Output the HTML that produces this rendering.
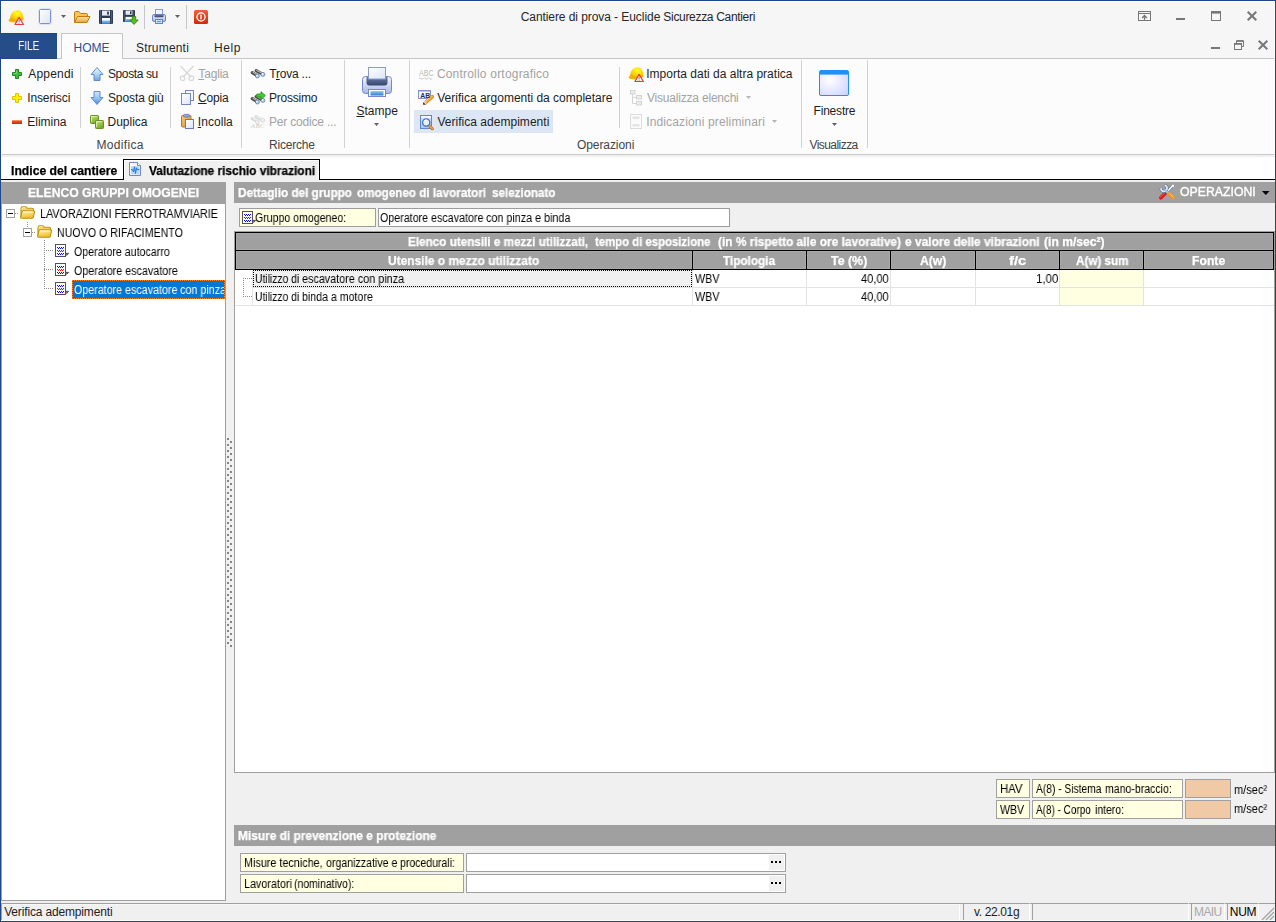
<!DOCTYPE html>
<html lang="it"><head><meta charset="utf-8"><title>Cantiere di prova - Euclide Sicurezza Cantieri</title>
<style>
html,body{margin:0;padding:0;background:#f0f0f0;}
body{width:1276px;height:922px;overflow:hidden;font-family:"Liberation Sans",sans-serif;}
#win{position:absolute;left:0;top:0;width:1276px;height:922px;overflow:hidden;background:#f0f0f0;}
.a{position:absolute;box-sizing:border-box;}
.t{position:absolute;white-space:nowrap;font-family:"Liberation Sans",sans-serif;}
svg{position:absolute;overflow:visible;}
u{text-decoration:underline;text-underline-offset:1px;}

.g{will-change:transform;}

</style></head>
<body>
<div id="win">
<svg width="0" height="0" style="position:absolute"><defs>
<linearGradient id="gDoc" x1="0" y1="0" x2="1" y2="1"><stop offset="0" stop-color="#ffffff"/><stop offset="1" stop-color="#dbe4f6"/></linearGradient>
<linearGradient id="gFold" x1="0" y1="0" x2="0" y2="1"><stop offset="0" stop-color="#ffe9a6"/><stop offset="1" stop-color="#eea030"/></linearGradient>
<linearGradient id="gBlueS" x1="0" y1="0" x2="0" y2="1"><stop offset="0" stop-color="#9ccbf2"/><stop offset="1" stop-color="#2e78c8"/></linearGradient>
<linearGradient id="gRed" x1="0" y1="0" x2="0" y2="1"><stop offset="0" stop-color="#f0603c"/><stop offset="1" stop-color="#d02806"/></linearGradient>
<linearGradient id="gArr" x1="0" y1="0" x2="0" y2="1"><stop offset="0" stop-color="#eaf5ff"/><stop offset="0.5" stop-color="#b4d6f6"/><stop offset="1" stop-color="#6aa6e6"/></linearGradient>
<linearGradient id="gArrD" x1="0" y1="0" x2="0" y2="1"><stop offset="0" stop-color="#cfe6fb"/><stop offset="0.5" stop-color="#98c4f0"/><stop offset="1" stop-color="#4a8adc"/></linearGradient>
<linearGradient id="gGrn" x1="0" y1="0" x2="0.6" y2="1"><stop offset="0" stop-color="#d6eca0"/><stop offset="0.45" stop-color="#a4cc50"/><stop offset="1" stop-color="#74a626"/></linearGradient>
<linearGradient id="gPr" x1="0" y1="0" x2="0" y2="1"><stop offset="0" stop-color="#f4f7ff"/><stop offset="1" stop-color="#a9b8e6"/></linearGradient>
<linearGradient id="gSlot" x1="0" y1="0" x2="0" y2="1"><stop offset="0" stop-color="#6d7ea6"/><stop offset="1" stop-color="#35456c"/></linearGradient>
<linearGradient id="gClip" x1="0" y1="0" x2="1" y2="1"><stop offset="0" stop-color="#f6cf86"/><stop offset="1" stop-color="#d48a2a"/></linearGradient>
<radialGradient id="gHelm" cx="0.55" cy="0.3" r="0.7"><stop offset="0" stop-color="#ffff20"/><stop offset="0.6" stop-color="#fbd406"/><stop offset="1" stop-color="#e8a800"/></radialGradient>
<radialGradient id="gWin" cx="0.35" cy="0.4" r="0.8"><stop offset="0" stop-color="#ffffff"/><stop offset="1" stop-color="#d2d2fb"/></radialGradient>
<linearGradient id="gYF" x1="0" y1="0" x2="0.3" y2="1"><stop offset="0" stop-color="#fff7b6"/><stop offset="1" stop-color="#efbc2e"/></linearGradient>
<linearGradient id="gMag" x1="0" y1="0" x2="0" y2="1"><stop offset="0" stop-color="#d6e7fa"/><stop offset="1" stop-color="#a6c6ec"/></linearGradient>
</defs></svg>
<div class="a" style="left:0px;top:0px;width:1276px;height:922px;background:#1f4685;"></div>
<div class="a" style="left:1px;top:1px;width:1274px;height:920px;background:#ffffff;"></div>
<div class="a" style="left:1px;top:155px;width:1274px;height:766px;background:#f0f0f0;"></div>
<div class="a" style="left:2px;top:2px;width:1272px;height:57px;background:#f6f6f6;"></div>
<div class="a" style="left:2px;top:58px;width:1272px;height:97px;background:#fcfcfc;border-top:1px solid #c6c6c6;border-bottom:1px solid #c9c9c9;"></div>
<div class="a" style="left:0px;top:33px;width:57px;height:26px;background:#254d87;border-top:1px solid #1e4583;border-bottom:1px solid #204684;"></div>
<span class="t g" style="left:17.77px;top:38.30px;font-size:12px;line-height:16px;color:#ffffff;transform:scaleX(0.8472);transform-origin:0 0;">FILE</span>
<div class="a" style="left:61px;top:33px;width:62px;height:26px;background:#fcfcfc;border:1px solid #c6c6c6;border-bottom:none;"></div>
<span class="t" style="left:73.52px;top:39.90px;font-size:12px;line-height:16px;color:#2b509a;letter-spacing:0.000px;">HOME</span>
<span class="t" style="left:135.96px;top:39.90px;font-size:12px;line-height:16px;color:#262626;letter-spacing:0.187px;">Strumenti</span>
<span class="t" style="left:214.02px;top:39.90px;font-size:12px;line-height:16px;color:#262626;letter-spacing:0.600px;">Help</span>
<span class="t" style="left:520.69px;top:8.90px;font-size:12px;line-height:16px;color:#262626;letter-spacing:-0.074px;">Cantiere di prova</span>
<span class="t" style="left:613.97px;top:8.90px;font-size:12px;line-height:16px;color:#262626;letter-spacing:-0.040px;">- Euclide</span>
<span class="t" style="left:663.36px;top:8.90px;font-size:12px;line-height:16px;color:#262626;letter-spacing:-0.319px;">Sicurezza Cantieri</span>
<svg style="left:8px;top:9px" width="16" height="17" viewBox="0 0 16 17"><path d="M0.3,11.2 C1.5,13.6 7,14 10.5,12.6 L10.5,10 L2,9.6 Z" fill="#f0b400"/>
<path d="M2.2,10.6 C2.2,4.5 5.5,1.2 9.3,1.2 C13,1.2 15.4,4.6 15.4,9.4 L15.5,11 C12.5,12.6 6,12.6 2.2,10.6 Z" fill="url(#gHelm)"/>
<path d="M5.2,3.2 C6,2.4 7,2 8,1.9" stroke="#fff8b0" stroke-width="1" fill="none"/>
<path d="M11.1,8.4 L15.4,15.5 L6.9,15.5 Z" fill="#f2f2f2" stroke="#e43a3a" stroke-width="1.15" stroke-linejoin="round"/>
<path d="M11.1,10.6 V13.1" stroke="#8a8a8a" stroke-width="1.1"/><rect x="10.55" y="13.7" width="1.1" height="1" fill="#8a8a8a"/></svg>
<svg style="left:38px;top:8px" width="14" height="17" viewBox="0 0 14 17"><rect x="1.5" y="1.5" width="11" height="14" rx="1" fill="url(#gDoc)" stroke="#7f90cc"/><rect x="0.5" y="0.5" width="13" height="16" rx="2" fill="none" stroke="#d4daf0" stroke-opacity="0.7"/></svg>
<svg style="left:61px;top:15px" width="5" height="3" viewBox="0 0 5 3"><path d="M0,0 H5 L2.5,3 Z" fill="#606060"/></svg>
<svg style="left:73px;top:10px" width="18" height="14" viewBox="0 0 18 14"><path d="M1.5,12.5 L1.5,2.6 Q1.5,1.5 2.6,1.5 L6,1.5 L7.6,3.5 L13.4,3.5 Q14.5,3.5 14.5,4.6 L14.5,6" fill="#f6c55c" stroke="#c07a1a"/>
<path d="M1.5,12.5 L4.6,6.5 L17,6.5 L14,12.5 Z" fill="url(#gFold)" stroke="#c07a1a" stroke-linejoin="round"/></svg>
<svg style="left:99px;top:10px" width="14" height="14" viewBox="0 0 14 14"><g transform="scale(1.0)"><rect x="0" y="0" width="14" height="14" rx="1" fill="#2e3a54"/>
<rect x="1" y="0" width="0.8" height="14" fill="#55617e"/><rect x="12.2" y="0" width="0.8" height="14" fill="#55617e"/>
<rect x="3" y="0.6" width="8" height="5" fill="#e6eaf4"/><rect x="8.2" y="1.6" width="1.6" height="3" fill="#20242e"/>
<rect x="3" y="8" width="8" height="6" fill="#ffffff"/><rect x="3" y="10.4" width="8" height="3.6" fill="url(#gBlueS)"/></g></svg>
<svg style="left:123px;top:10px" width="12" height="12" viewBox="0 0 12 12"><g transform="scale(0.8571428571428571)"><rect x="0" y="0" width="14" height="14" rx="1" fill="#2e3a54"/>
<rect x="1" y="0" width="0.8" height="14" fill="#55617e"/><rect x="12.2" y="0" width="0.8" height="14" fill="#55617e"/>
<rect x="3" y="0.6" width="8" height="5" fill="#e6eaf4"/><rect x="8.2" y="1.6" width="1.6" height="3" fill="#20242e"/>
<rect x="3" y="8" width="8" height="6" fill="#ffffff"/><rect x="3" y="10.4" width="8" height="3.6" fill="url(#gBlueS)"/></g></svg>
<svg style="left:129px;top:16px" width="10" height="9" viewBox="0 0 10 9"><path d="M3.3,0.6 H6.7 V4 H9.2 L5,8.4 L0.8,4 H3.3 Z" fill="#5cbc22" stroke="#35880e" stroke-width="0.9" stroke-linejoin="round"/></svg>
<div class="a" style="left:144px;top:5px;width:1px;height:24px;background:#c6c6c6;"></div>
<svg style="left:152px;top:9px" width="15" height="15" viewBox="0 0 15 15"><rect x="3.5" y="0.5" width="7" height="6" fill="#eef2fb" stroke="#8a9bd2"/>
<rect x="0.5" y="5.5" width="13" height="7" rx="1.6" fill="url(#gPr)" stroke="#6e80c4"/>
<rect x="2.4" y="5.6" width="9.2" height="2.6" rx="0.8" fill="url(#gSlot)"/>
<rect x="3.5" y="10.5" width="7" height="4" fill="#ffffff" stroke="#6e80c4"/>
<rect x="4.6" y="11.6" width="4.8" height="1.8" fill="#5aa2e4"/></svg>
<svg style="left:175px;top:15px" width="5" height="3" viewBox="0 0 5 3"><path d="M0,0 H5 L2.5,3 Z" fill="#606060"/></svg>
<div class="a" style="left:186px;top:5px;width:1px;height:24px;background:#c6c6c6;"></div>
<svg style="left:194px;top:10px" width="14" height="14" viewBox="0 0 14 14"><rect x="0" y="0" width="14" height="14" rx="1.6" fill="url(#gRed)"/><circle cx="7" cy="7" r="4.1" fill="none" stroke="#fff" stroke-width="1.3"/><rect x="6.3" y="4.6" width="1.4" height="4.8" fill="#fff"/></svg>
<svg style="left:1138px;top:11px" width="13" height="10" viewBox="0 0 13 10"><rect x="0.5" y="0.5" width="12" height="9" fill="none" stroke="#777777"/><path d="M0.5,2.5 H12.5" stroke="#777777"/><path d="M6.5,9 V4.6 M4,7 L6.5,4.5 L9,7" stroke="#777777" fill="none" stroke-width="1.25"/></svg>
<div class="a" style="left:1176px;top:18px;width:9px;height:2px;background:#777777;"></div>
<svg style="left:1211px;top:11px" width="10" height="10" viewBox="0 0 10 10"><rect x="0.5" y="0.5" width="9" height="9" fill="none" stroke="#777777"/><rect x="0" y="0" width="10" height="2.6" fill="#777777"/></svg>
<svg style="left:1247px;top:11px" width="10" height="10" viewBox="0 0 10 10"><path d="M0.7,0.7 L9.3,9.3 M9.3,0.7 L0.7,9.3" stroke="#777777" stroke-width="2"/></svg>
<div class="a" style="left:1211px;top:47px;width:9px;height:2px;background:#777777;"></div>
<svg style="left:1234px;top:40px" width="10" height="10" viewBox="0 0 10 10"><path d="M2.5,3 V0.8 H9.5 V6.5 H7.5" fill="none" stroke="#777777" stroke-width="1"/><path d="M2.5,1 H9.5" stroke="#777777" stroke-width="1.6"/><rect x="0.5" y="3.5" width="7" height="6" fill="none" stroke="#777777"/><path d="M0.5,4 H7.5" stroke="#777777" stroke-width="1.6"/></svg>
<svg style="left:1258px;top:40px" width="10" height="10" viewBox="0 0 10 10"><path d="M0.7,0.7 L9.3,9.3 M9.3,0.7 L0.7,9.3" stroke="#777777" stroke-width="2"/></svg>
<span class="t" style="left:28.28px;top:65.70px;font-size:12px;line-height:16px;color:#1e1e1e;letter-spacing:0.198px;">Appendi</span>
<span class="t" style="left:27.19px;top:89.70px;font-size:12px;line-height:16px;color:#1e1e1e;letter-spacing:-0.112px;">Inserisci</span>
<span class="t" style="left:27.32px;top:113.60px;font-size:12px;line-height:16px;color:#1e1e1e;letter-spacing:-0.029px;">Elimina</span>
<svg style="left:12px;top:69px" width="10" height="10" viewBox="0 0 10 10"><path d="M3.5,0.5 H6.5 V3.5 H9.5 V6.5 H6.5 V9.5 H3.5 V6.5 H0.5 V3.5 H3.5 Z" fill="#3fbb3f" stroke="#1f8e1f"/><path d="M4.5,1.5 V4.5 H1.5" stroke="#8fe08f" fill="none" stroke-width="1" stroke-opacity="0.7"/></svg>
<svg style="left:12px;top:93px" width="10" height="10" viewBox="0 0 10 10"><path d="M3.5,0.5 H6.5 V3.5 H9.5 V6.5 H6.5 V9.5 H3.5 V6.5 H0.5 V3.5 H3.5 Z" fill="#ffee00" stroke="#dcc600"/><path d="M4.5,1.5 V4.5 H1.5" stroke="#fff200" fill="none" stroke-width="1" stroke-opacity="0.7"/></svg>
<svg style="left:12px;top:120px" width="10" height="4" viewBox="0 0 10 4"><rect x="0" y="0" width="10" height="4" fill="url(#gRed)"/><rect x="0" y="0" width="10" height="1" fill="#ff8a5c"/></svg>
<div class="a" style="left:80px;top:67px;width:1px;height:61px;background:#d2d2d2;"></div>
<span class="t" style="left:107.96px;top:65.70px;font-size:12px;line-height:16px;color:#1e1e1e;letter-spacing:-0.379px;">Sposta su</span>
<span class="t" style="left:107.96px;top:89.70px;font-size:12px;line-height:16px;color:#1e1e1e;letter-spacing:-0.101px;">Sposta giù</span>
<span class="t" style="left:107.52px;top:113.60px;font-size:12px;line-height:16px;color:#1e1e1e;letter-spacing:-0.008px;">Duplica</span>
<svg style="left:90px;top:66px" width="14" height="16" viewBox="0 0 14 16"><path d="M7,1.5 L13,8.5 L10,8.5 L10,14.5 L4,14.5 L4,8.5 L1,8.5 Z" fill="url(#gArr)" stroke="#5584c8" stroke-width="0.9" stroke-linejoin="round"/></svg>
<svg style="left:90px;top:90px" width="14" height="16" viewBox="0 0 14 16"><path d="M4,1.5 L10,1.5 L10,7.5 L13,7.5 L7,14.5 L1,7.5 L4,7.5 Z" fill="url(#gArrD)" stroke="#5584c8" stroke-width="0.9" stroke-linejoin="round"/></svg>
<svg style="left:90px;top:115px" width="14" height="14" viewBox="0 0 14 14"><rect x="0.5" y="0.5" width="8" height="8" rx="0.8" fill="url(#gGrn)" stroke="#6a8e26"/><rect x="5.5" y="5.5" width="8" height="8" rx="0.8" fill="url(#gGrn)" stroke="#6a8e26"/><path d="M1.5,7 V1.5 H7 M6.5,12 V6.5 H12" stroke="#e6f4c0" stroke-opacity="0.8" fill="none" stroke-width="0.9"/></svg>
<div class="a" style="left:170px;top:67px;width:1px;height:61px;background:#d2d2d2;"></div>
<span class="t" style="left:198.33px;top:65.70px;font-size:12px;line-height:16px;color:#a3a3a3;letter-spacing:-0.178px;"><u>T</u>aglia</span>
<span class="t" style="left:198.09px;top:89.70px;font-size:12px;line-height:16px;color:#1e1e1e;letter-spacing:-0.162px;"><u>C</u>opia</span>
<span class="t" style="left:197.79px;top:113.60px;font-size:12px;line-height:16px;color:#1e1e1e;letter-spacing:0.051px;"><u>I</u>ncolla</span>
<svg style="left:179px;top:65px" width="16" height="17" viewBox="0 0 16 17"><path d="M1.5,1 L12,12.2 M14.5,1 L4,12.2" stroke="#d9d9d9" stroke-width="1.3" fill="none"/><circle cx="3.6" cy="13.2" r="2.3" fill="none" stroke="#d9d9d9" stroke-width="1.2"/><circle cx="12.4" cy="13.2" r="2.3" fill="none" stroke="#d9d9d9" stroke-width="1.2"/></svg>
<svg style="left:181px;top:90px" width="14" height="16" viewBox="0 0 14 16"><rect x="4.5" y="0.5" width="8" height="10" fill="#f6f8fd" stroke="#7686be"/><rect x="0.5" y="3.5" width="9" height="11" fill="url(#gDoc)" stroke="#7686be"/></svg>
<svg style="left:181px;top:114px" width="14" height="16" viewBox="0 0 14 16"><rect x="0.5" y="1.5" width="9.5" height="11.5" rx="1" fill="url(#gClip)" stroke="#b87a22"/><rect x="2.5" y="0.4" width="6" height="2.6" rx="1" fill="#98a6da" stroke="#5f70b6" stroke-width="0.8"/><rect x="4.5" y="5.5" width="8" height="9" fill="url(#gDoc)" stroke="#6a7abc"/></svg>
<div class="a" style="left:241px;top:60px;width:1px;height:88px;background:#d2d2d2;"></div>
<span class="t" style="left:269.23px;top:65.70px;font-size:12px;line-height:16px;color:#1e1e1e;letter-spacing:-0.214px;">T<u>r</u>ova ...</span>
<span class="t" style="left:269.02px;top:89.70px;font-size:12px;line-height:16px;color:#1e1e1e;letter-spacing:-0.218px;">Prossimo</span>
<span class="t" style="left:269.02px;top:113.60px;font-size:12px;line-height:16px;color:#a3a3a3;letter-spacing:-0.189px;">Per codice ...</span>
<svg style="left:251px;top:69px" width="15" height="10" viewBox="0 0 15 10"><path d="M1.3,3.6 L6,6.5" stroke="#4e4e4e" stroke-width="3.2" stroke-linecap="round"/>
<path d="M5.2,1.7 L11.4,5.1" stroke="#4e4e4e" stroke-width="3.2" stroke-linecap="round"/>
<path d="M1.6,3.1 L5.6,5.5 M5.4,1.2 L10.8,4.1" stroke="#b9b9b9" stroke-width="1.1"/>
<circle cx="6.4" cy="7" r="2" fill="#a9d3fb" stroke="#5b6f88" stroke-width="0.7"/>
<circle cx="11.9" cy="5.4" r="2" fill="#a9d3fb" stroke="#5b6f88" stroke-width="0.7"/>
<circle cx="5.9" cy="6.5" r="0.8" fill="#ffffff"/><circle cx="11.4" cy="4.9" r="0.8" fill="#ffffff"/></svg>
<svg style="left:251px;top:95px" width="15" height="10" viewBox="0 0 15 10"><path d="M1.3,3.6 L6,6.5" stroke="#4e4e4e" stroke-width="3.2" stroke-linecap="round"/>
<path d="M5.2,1.7 L11.4,5.1" stroke="#4e4e4e" stroke-width="3.2" stroke-linecap="round"/>
<path d="M1.6,3.1 L5.6,5.5 M5.4,1.2 L10.8,4.1" stroke="#b9b9b9" stroke-width="1.1"/>
<circle cx="6.4" cy="7" r="2" fill="#a9d3fb" stroke="#5b6f88" stroke-width="0.7"/>
<circle cx="11.9" cy="5.4" r="2" fill="#a9d3fb" stroke="#5b6f88" stroke-width="0.7"/>
<circle cx="5.9" cy="6.5" r="0.8" fill="#ffffff"/><circle cx="11.4" cy="4.9" r="0.8" fill="#ffffff"/></svg>
<svg style="left:256px;top:90.5px" width="10" height="9" viewBox="0 0 10 9"><path d="M0.8,3.1 H5 V0.7 L9.3,4.5 L5,8.3 V5.9 H0.8 Z" fill="#3fd22a" stroke="#1a9a14" stroke-width="0.9" stroke-linejoin="round"/></svg>
<svg style="left:251px;top:115px" width="15" height="10" viewBox="0 0 15 10"><path d="M1.3,3.6 L6,6.5" stroke="#dadada" stroke-width="3.2" stroke-linecap="round"/>
<path d="M5.2,1.7 L11.4,5.1" stroke="#dadada" stroke-width="3.2" stroke-linecap="round"/>
<path d="M1.6,3.1 L5.6,5.5 M5.4,1.2 L10.8,4.1" stroke="#f0f0f0" stroke-width="1.1"/>
<circle cx="6.4" cy="7" r="2" fill="#ececec" stroke="#d4d4d4" stroke-width="0.7"/>
<circle cx="11.9" cy="5.4" r="2" fill="#ececec" stroke="#d4d4d4" stroke-width="0.7"/>
<circle cx="5.9" cy="6.5" r="0.8" fill="#f8f8f8"/><circle cx="11.4" cy="4.9" r="0.8" fill="#f8f8f8"/></svg>
<span class="t" style="left:250.8px;top:122px;font-family:'Liberation Serif',serif;font-style:italic;font-size:7px;line-height:8px;color:#cacaca;letter-spacing:0.35px">ABC</span>
<div class="a" style="left:344px;top:60px;width:1px;height:88px;background:#d2d2d2;"></div>
<span class="t" style="left:356.46px;top:102.60px;font-size:12px;line-height:16px;color:#1e1e1e;letter-spacing:0.001px;"><u>S</u>tampe</span>
<svg style="left:361px;top:66px" width="32" height="32" viewBox="0 0 32 32"><rect x="7.5" y="1.5" width="17" height="12" fill="url(#gDoc)" stroke="#8b9bd0"/>
<rect x="1.5" y="10.5" width="29" height="17" rx="3" fill="url(#gPr)" stroke="#7486c8"/>
<path d="M5.5,11 H26.5 V16.5 Q26.5,19.5 23.5,19.5 H8.5 Q5.5,19.5 5.5,16.5 Z" fill="url(#gSlot)"/>
<rect x="7.5" y="1.5" width="17" height="11.5" fill="url(#gDoc)" stroke="#8b9bd0"/>
<rect x="7.5" y="23.5" width="17" height="7" fill="#ffffff" stroke="#7486c8"/>
<rect x="9.5" y="25" width="13" height="4.5" fill="url(#gBlueS)"/></svg>
<svg style="left:374px;top:123px" width="5" height="3" viewBox="0 0 5 3"><path d="M0,0 H5 L2.5,3 Z" fill="#606060"/></svg>
<div class="a" style="left:409px;top:60px;width:1px;height:88px;background:#d2d2d2;"></div>
<span class="t" style="left:436.89px;top:65.70px;font-size:12px;line-height:16px;color:#a3a3a3;letter-spacing:0.203px;">Controllo ortografico</span>
<span class="t" style="left:437.25px;top:89.70px;font-size:12px;line-height:16px;color:#1e1e1e;letter-spacing:-0.005px;">Verifica argomenti</span>
<span class="t" style="left:536.40px;top:89.70px;font-size:12px;line-height:16px;color:#1e1e1e;letter-spacing:-0.001px;">da completare</span>
<div class="a" style="left:414px;top:110px;width:139px;height:23px;background:#dce6f4;"></div>
<span class="t" style="left:437.45px;top:113.60px;font-size:12px;line-height:16px;color:#1e1e1e;letter-spacing:0.025px;">Verifica adempimenti</span>
<span class="t" style="left:418.8px;top:69.4px;font-size:8.4px;line-height:9px;color:#b9b9b9;transform:scaleX(0.84);transform-origin:0 0">ABC</span>
<svg style="left:418px;top:77px" width="16" height="3" viewBox="0 0 16 3"><path d="M0.8,1.6 q1.1,-1.4 2.2,0 t2.2,0 t2.2,0 t2.2,0 t2.2,0 t2.2,0" stroke="#c4c4c4" fill="none" stroke-width="0.9"/></svg>
<svg style="left:418px;top:90px" width="16" height="16" viewBox="0 0 16 16"><rect x="0.5" y="0.5" width="12" height="8" fill="#f6f8fd" stroke="#8494cc"/><rect x="0.5" y="0.3" width="12" height="1.2" fill="#8494cc"/>
<path d="M14.2,6.6 L7,13" stroke="#c87818" stroke-width="3.6" stroke-linecap="round"/><path d="M14.2,6.6 L7,13" stroke="#f0a838" stroke-width="2.6" stroke-linecap="round"/><path d="M13.6,5.9 L6.4,12.3" stroke="#ffe090" stroke-width="0.9"/>
<path d="M5,14.8 L5.5,12.2 L7.6,14.2 Z" fill="#1c2a48"/><path d="M5.5,12.2 L6.6,11.2 L8.6,13.2 L7.6,14.2 Z" fill="#f4dcb0"/></svg>
<span class="t" style="left:420.3px;top:91.6px;font-size:6.8px;font-weight:700;line-height:7px;color:#1f2f5c;letter-spacing:0.1px">AB</span>
<svg style="left:420px;top:115px" width="14" height="15" viewBox="0 0 14 15"><rect x="0.5" y="0.5" width="11" height="13" fill="url(#gMag)" stroke="#5b8acc"/><rect x="1" y="1" width="10" height="2" fill="#f4f8fe"/>
<path d="M8.6,10 L12.3,13.7" stroke="#a86414" stroke-width="3" stroke-linecap="round"/><path d="M8.6,10 L12.3,13.7" stroke="#f0a040" stroke-width="1.9" stroke-linecap="round"/>
<circle cx="6.2" cy="7.5" r="3.6" fill="#e4f0fc" stroke="#446fb4" stroke-width="1.3"/><path d="M4,6.6 A2.4,2.4 0 0 1 6.6,5" stroke="#ffffff" stroke-width="0.9" fill="none"/></svg>
<div class="a" style="left:619px;top:67px;width:1px;height:61px;background:#d2d2d2;"></div>
<span class="t" style="left:646.19px;top:65.70px;font-size:12px;line-height:16px;color:#1e1e1e;letter-spacing:0.008px;">Importa dati da altra pratica</span>
<span class="t" style="left:646.95px;top:89.70px;font-size:12px;line-height:16px;color:#a3a3a3;letter-spacing:-0.195px;">Visualizza elenchi</span>
<span class="t" style="left:646.19px;top:113.60px;font-size:12px;line-height:16px;color:#a3a3a3;letter-spacing:0.147px;">Indicazioni preliminari</span>
<svg style="left:628px;top:66px" width="16" height="17" viewBox="0 0 16 17"><path d="M0.3,11.2 C1.5,13.6 7,14 10.5,12.6 L10.5,10 L2,9.6 Z" fill="#f0b400"/>
<path d="M2.2,10.6 C2.2,4.5 5.5,1.2 9.3,1.2 C13,1.2 15.4,4.6 15.4,9.4 L15.5,11 C12.5,12.6 6,12.6 2.2,10.6 Z" fill="url(#gHelm)"/>
<path d="M5.2,3.2 C6,2.4 7,2 8,1.9" stroke="#fff8b0" stroke-width="1" fill="none"/>
<path d="M11.1,8.4 L15.4,15.5 L6.9,15.5 Z" fill="#f2f2f2" stroke="#e43a3a" stroke-width="1.15" stroke-linejoin="round"/>
<path d="M11.1,10.6 V13.1" stroke="#8a8a8a" stroke-width="1.1"/><rect x="10.55" y="13.7" width="1.1" height="1" fill="#8a8a8a"/></svg>
<svg style="left:630px;top:90px" width="13" height="16" viewBox="0 0 13 16"><path d="M2.5,4 V13.5 H6.5 M2.5,7.5 H6.5" stroke="#d4d4d4" fill="none"/><rect x="0.5" y="0.5" width="4.5" height="3.5" fill="#ececec" stroke="#d4d4d4"/><rect x="6.5" y="5.5" width="5" height="3.5" fill="#ececec" stroke="#d4d4d4"/><rect x="6.5" y="11.5" width="5" height="3.5" fill="#ececec" stroke="#d4d4d4"/></svg>
<svg style="left:630px;top:114px" width="13" height="16" viewBox="0 0 13 16"><rect x="0.5" y="0.5" width="11" height="14" fill="#fbfbfb" stroke="#dcdcdc"/><rect x="2.5" y="2.5" width="7" height="2.5" fill="#e4e4e4"/><rect x="2.5" y="10" width="7" height="2.5" fill="#e4e4e4"/></svg>
<svg style="left:746px;top:96px" width="5" height="3" viewBox="0 0 5 3"><path d="M0,0 H5 L2.5,3 Z" fill="#b4b4b4"/></svg>
<svg style="left:772px;top:120px" width="5" height="3" viewBox="0 0 5 3"><path d="M0,0 H5 L2.5,3 Z" fill="#b4b4b4"/></svg>
<div class="a" style="left:801px;top:60px;width:1px;height:88px;background:#d2d2d2;"></div>
<span class="t" style="left:813.52px;top:102.50px;font-size:12px;line-height:16px;color:#1e1e1e;letter-spacing:-0.192px;">Finestre</span>
<svg style="left:819px;top:70px" width="30" height="26" viewBox="0 0 30 26"><rect x="0.5" y="0.5" width="29" height="25" rx="1.5" fill="url(#gWin)" stroke="#1e90fa"/><rect x="1" y="1" width="28" height="3.6" fill="#1e90fa"/></svg>
<svg style="left:832px;top:123px" width="5" height="3" viewBox="0 0 5 3"><path d="M0,0 H5 L2.5,3 Z" fill="#606060"/></svg>
<div class="a" style="left:867px;top:60px;width:1px;height:88px;background:#d2d2d2;"></div>
<span class="t" style="left:96.52px;top:136.90px;font-size:12px;line-height:16px;color:#444444;letter-spacing:0.328px;">Modifica</span>
<span class="t" style="left:269.02px;top:136.90px;font-size:12px;line-height:16px;color:#444444;letter-spacing:-0.192px;">Ricerche</span>
<span class="t" style="left:576.93px;top:136.90px;font-size:12px;line-height:16px;color:#444444;letter-spacing:-0.073px;">Operazioni</span>
<span class="t" style="left:809.45px;top:136.90px;font-size:12px;line-height:16px;color:#444444;letter-spacing:-0.551px;">Visualizza</span>
<div class="a" style="left:1px;top:157px;width:1274px;height:22px;background:#ffffff;"></div>
<div class="a" style="left:1px;top:179px;width:1274px;height:1px;background:#000000;"></div>
<div class="a" style="left:123px;top:159px;width:197px;height:21px;background:#f0f0f0;border:1px solid #000;border-bottom:none;"></div>
<div class="a" style="left:124px;top:160px;width:195px;height:1px;background:#ffffff;"></div>
<div class="a" style="left:318px;top:160px;width:1px;height:19px;background:#ffffff;"></div>
<div class="a" style="left:124px;top:160px;width:1px;height:19px;background:#ffffff;"></div>
<span class="t g" style="left:11.19px;top:163.00px;font-size:12px;line-height:16px;color:#000;font-weight:700;-webkit-text-stroke:0.25px #000;transform:scaleX(1.0144);transform-origin:0 0;">Indice del cantiere</span>
<span class="t g" style="left:149.22px;top:163.00px;font-size:12px;line-height:16px;color:#000;font-weight:700;-webkit-text-stroke:0.25px #000;transform:scaleX(0.9885);transform-origin:0 0;">Valutazione rischio vibrazioni</span>
<svg style="left:129px;top:162px" width="12" height="14" viewBox="0 0 12 14"><path d="M0.5,0.5 H8.5 L11.5,3.5 V13.5 H0.5 Z" fill="url(#gDoc)" stroke="#728ac4"/><path d="M8.5,0.5 V3.5 H11.5" fill="#fff" stroke="#728ac4"/>
<rect x="2" y="4.2" width="8.4" height="8" fill="#b9d7f7"/>
<path d="M2,7.6 H3.4 L4.4,9.7 L5.5,4.8 L6.5,11.5 L7.5,5.8 L8.3,7.6 H10.3" stroke="#1a72e0" fill="none" stroke-width="1" stroke-linejoin="round"/></svg>
<div class="a" style="left:1px;top:182px;width:225px;height:21px;background:#a0a0a0;"></div>
<span class="t g" style="left:27.69px;top:184.60px;font-size:12px;line-height:16px;color:#ffffff;font-weight:700;-webkit-text-stroke:0.25px #ffffff;transform:scaleX(1.0145);transform-origin:0 0;">ELENCO GRUPPI OMOGENEI</span>
<div class="a" style="left:1px;top:203px;width:225px;height:698px;background:#ffffff;border:1px solid #a0a0a0;"></div>
<span class="t g" style="left:39.62px;top:205.50px;font-size:12px;line-height:16px;color:#000;transform:scaleX(0.8961);transform-origin:0 0;">LAVORAZIONI FERROTRAMVIARIE</span>
<span class="t g" style="left:56.93px;top:224.50px;font-size:12px;line-height:16px;color:#000;transform:scaleX(0.8878);transform-origin:0 0;">NUOVO O RIFACIMENTO</span>
<span class="t g" style="left:74.10px;top:243.50px;font-size:12px;line-height:16px;color:#000;transform:scaleX(0.8851);transform-origin:0 0;">Operatore autocarro</span>
<span class="t g" style="left:74.09px;top:262.50px;font-size:12px;line-height:16px;color:#000;transform:scaleX(0.8933);transform-origin:0 0;">Operatore escavatore</span>
<div class="a" style="left:72px;top:280px;width:153px;height:19px;background:#0078d7;border:1px dotted #ff8728;"></div>
<span class="t g" style="left:74.09px;top:281.50px;font-size:12px;line-height:16px;color:#fff;transform:scaleX(0.8907);transform-origin:0 0;">Operatore escavatore</span>
<span class="t g" style="left:179.94px;top:281.50px;font-size:12px;line-height:16px;color:#fff;transform:scaleX(0.8967);transform-origin:0 0;width:49.40px;overflow:hidden;">con pinza e binda</span>
<svg style="left:6px;top:209px" width="9" height="9" viewBox="0 0 9 9"><rect x="0.5" y="0.5" width="8" height="8" fill="#fff" stroke="#a2a2a2"/><path d="M2,4.5 H7" stroke="#000" stroke-width="1"/></svg>
<div class="a" style="left:15px;top:213px;width:4px;height:1px;background-image:repeating-linear-gradient(90deg,#8c8c8c 0 1px,transparent 1px 2px);"></div>
<svg style="left:20px;top:206px" width="15" height="13" viewBox="0 0 15 13"><path d="M1,11 L1,2.4 Q1,0.7 2.6,0.7 L5.4,0.7 Q6.6,0.7 7.2,2.2 L12,2.2 Q13.6,2.2 13.6,3.8 L13.6,6" fill="#f4d25e" stroke="#bf920e" stroke-width="1.1"/>
<path d="M2,3.6 V2.6 Q2,1.8 2.8,1.8 H5.4" fill="none" stroke="#fff6c4" stroke-width="0.9"/>
<path d="M1.6,12.3 Q0.5,12.3 0.7,11.2 L1.9,5.8 Q2.1,4.7 3.2,4.7 L13.6,4.7 Q14.7,4.7 14.5,5.8 L13.3,11.2 Q13.1,12.3 12,12.3 Z" fill="url(#gYF)" stroke="#bf920e" stroke-width="1.1"/>
<path d="M3,6 H12.6" stroke="#fffbe0" stroke-width="0.9"/></svg>
<div class="a" style="left:27px;top:222px;width:1px;height:6px;background-image:repeating-linear-gradient(180deg,#8c8c8c 0 1px,transparent 1px 2px);"></div>
<svg style="left:23px;top:228px" width="9" height="9" viewBox="0 0 9 9"><rect x="0.5" y="0.5" width="8" height="8" fill="#fff" stroke="#a2a2a2"/><path d="M2,4.5 H7" stroke="#000" stroke-width="1"/></svg>
<div class="a" style="left:32px;top:232px;width:4px;height:1px;background-image:repeating-linear-gradient(90deg,#8c8c8c 0 1px,transparent 1px 2px);"></div>
<svg style="left:37px;top:225px" width="15" height="13" viewBox="0 0 15 13"><path d="M1,11 L1,2.4 Q1,0.7 2.6,0.7 L5.4,0.7 Q6.6,0.7 7.2,2.2 L12,2.2 Q13.6,2.2 13.6,3.8 L13.6,6" fill="#f4d25e" stroke="#bf920e" stroke-width="1.1"/>
<path d="M2,3.6 V2.6 Q2,1.8 2.8,1.8 H5.4" fill="none" stroke="#fff6c4" stroke-width="0.9"/>
<path d="M1.6,12.3 Q0.5,12.3 0.7,11.2 L1.9,5.8 Q2.1,4.7 3.2,4.7 L13.6,4.7 Q14.7,4.7 14.5,5.8 L13.3,11.2 Q13.1,12.3 12,12.3 Z" fill="url(#gYF)" stroke="#bf920e" stroke-width="1.1"/>
<path d="M3,6 H12.6" stroke="#fffbe0" stroke-width="0.9"/></svg>
<div class="a" style="left:44px;top:240px;width:1px;height:49px;background-image:repeating-linear-gradient(180deg,#8c8c8c 0 1px,transparent 1px 2px);"></div>
<div class="a" style="left:44px;top:250px;width:9px;height:1px;background-image:repeating-linear-gradient(90deg,#8c8c8c 0 1px,transparent 1px 2px);"></div>
<div class="a" style="left:44px;top:269px;width:9px;height:1px;background-image:repeating-linear-gradient(90deg,#8c8c8c 0 1px,transparent 1px 2px);"></div>
<div class="a" style="left:44px;top:288px;width:9px;height:1px;background-image:repeating-linear-gradient(90deg,#8c8c8c 0 1px,transparent 1px 2px);"></div>
<svg style="left:55px;top:244px" width="15" height="13" viewBox="0 0 15 13"><g shape-rendering="crispEdges"><rect x="0.5" y="0.5" width="10" height="12" fill="#ffffff" stroke="#5a4e4e"/><rect x="2" y="3" width="1" height="1" fill="#0000ff"/><rect x="4" y="3" width="1" height="1" fill="#0000ff"/><rect x="6" y="3" width="1" height="1" fill="#0000ff"/><rect x="8" y="3" width="1" height="1" fill="#0000ff"/><rect x="3" y="4" width="1" height="1" fill="#0000ff"/><rect x="5" y="4" width="1" height="1" fill="#0000ff"/><rect x="7" y="4" width="1" height="1" fill="#0000ff"/><rect x="2" y="6" width="1" height="1" fill="#f00000"/><rect x="4" y="6" width="1" height="1" fill="#f00000"/><rect x="6" y="6" width="1" height="1" fill="#f00000"/><rect x="8" y="6" width="1" height="1" fill="#f00000"/><rect x="3" y="7" width="1" height="1" fill="#f00000"/><rect x="5" y="7" width="1" height="1" fill="#f00000"/><rect x="7" y="7" width="1" height="1" fill="#f00000"/><rect x="2" y="9" width="1" height="1" fill="#0000ff"/><rect x="4" y="9" width="1" height="1" fill="#0000ff"/><rect x="6" y="9" width="1" height="1" fill="#0000ff"/><rect x="8" y="9" width="1" height="1" fill="#0000ff"/><rect x="3" y="10" width="1" height="1" fill="#0000ff"/><rect x="5" y="10" width="1" height="1" fill="#0000ff"/><rect x="7" y="10" width="1" height="1" fill="#0000ff"/></g><path d="M11,8.8 L14.4,9 L11.4,12.2 Z" fill="#555"/></svg>
<svg style="left:55px;top:263px" width="15" height="13" viewBox="0 0 15 13"><g shape-rendering="crispEdges"><rect x="0.5" y="0.5" width="10" height="12" fill="#ffffff" stroke="#5a4e4e"/><rect x="2" y="3" width="1" height="1" fill="#0000ff"/><rect x="4" y="3" width="1" height="1" fill="#0000ff"/><rect x="6" y="3" width="1" height="1" fill="#0000ff"/><rect x="8" y="3" width="1" height="1" fill="#0000ff"/><rect x="3" y="4" width="1" height="1" fill="#0000ff"/><rect x="5" y="4" width="1" height="1" fill="#0000ff"/><rect x="7" y="4" width="1" height="1" fill="#0000ff"/><rect x="2" y="6" width="1" height="1" fill="#f00000"/><rect x="4" y="6" width="1" height="1" fill="#f00000"/><rect x="6" y="6" width="1" height="1" fill="#f00000"/><rect x="8" y="6" width="1" height="1" fill="#f00000"/><rect x="3" y="7" width="1" height="1" fill="#f00000"/><rect x="5" y="7" width="1" height="1" fill="#f00000"/><rect x="7" y="7" width="1" height="1" fill="#f00000"/><rect x="2" y="9" width="1" height="1" fill="#0000ff"/><rect x="4" y="9" width="1" height="1" fill="#0000ff"/><rect x="6" y="9" width="1" height="1" fill="#0000ff"/><rect x="8" y="9" width="1" height="1" fill="#0000ff"/><rect x="3" y="10" width="1" height="1" fill="#0000ff"/><rect x="5" y="10" width="1" height="1" fill="#0000ff"/><rect x="7" y="10" width="1" height="1" fill="#0000ff"/></g><path d="M11,8.8 L14.4,9 L11.4,12.2 Z" fill="#555"/></svg>
<svg style="left:55px;top:282px" width="15" height="13" viewBox="0 0 15 13"><g shape-rendering="crispEdges"><rect x="0.5" y="0.5" width="10" height="12" fill="#ffffff" stroke="#5a4e4e"/><rect x="2" y="3" width="1" height="1" fill="#0000ff"/><rect x="4" y="3" width="1" height="1" fill="#0000ff"/><rect x="6" y="3" width="1" height="1" fill="#0000ff"/><rect x="8" y="3" width="1" height="1" fill="#0000ff"/><rect x="3" y="4" width="1" height="1" fill="#0000ff"/><rect x="5" y="4" width="1" height="1" fill="#0000ff"/><rect x="7" y="4" width="1" height="1" fill="#0000ff"/><rect x="2" y="6" width="1" height="1" fill="#f00000"/><rect x="4" y="6" width="1" height="1" fill="#f00000"/><rect x="6" y="6" width="1" height="1" fill="#f00000"/><rect x="8" y="6" width="1" height="1" fill="#f00000"/><rect x="3" y="7" width="1" height="1" fill="#f00000"/><rect x="5" y="7" width="1" height="1" fill="#f00000"/><rect x="7" y="7" width="1" height="1" fill="#f00000"/><rect x="2" y="9" width="1" height="1" fill="#0000ff"/><rect x="4" y="9" width="1" height="1" fill="#0000ff"/><rect x="6" y="9" width="1" height="1" fill="#0000ff"/><rect x="8" y="9" width="1" height="1" fill="#0000ff"/><rect x="3" y="10" width="1" height="1" fill="#0000ff"/><rect x="5" y="10" width="1" height="1" fill="#0000ff"/><rect x="7" y="10" width="1" height="1" fill="#0000ff"/></g><path d="M11,8.8 L14.4,9 L11.4,12.2 Z" fill="#555"/></svg>
<div class="a" style="left:227px;top:438px;width:2px;height:206px;background-image:repeating-linear-gradient(180deg,#858585 0 2px,transparent 2px 6px);"></div>
<div class="a" style="left:230px;top:441px;width:2px;height:206px;background-image:repeating-linear-gradient(180deg,#858585 0 2px,transparent 2px 6px);"></div>
<div class="a" style="left:228px;top:439px;width:2px;height:206px;background-image:repeating-linear-gradient(180deg,transparent 0 1px,#f8f8f8 1px 2px,transparent 2px 6px);opacity:0.6;"></div>
<div class="a" style="left:234px;top:182px;width:1041px;height:21px;background:#a0a0a0;"></div>
<span class="t g" style="left:238.22px;top:184.60px;font-size:12px;line-height:16px;color:#ffffff;font-weight:700;-webkit-text-stroke:0.25px #ffffff;transform:scaleX(0.9766);transform-origin:0 0;">Dettaglio del gruppo</span>
<span class="t g" style="left:357.14px;top:184.60px;font-size:12px;line-height:16px;color:#ffffff;font-weight:700;-webkit-text-stroke:0.25px #ffffff;transform:scaleX(0.9728);transform-origin:0 0;">omogeneo di lavoratori</span>
<span class="t g" style="left:491.69px;top:184.60px;font-size:12px;line-height:16px;color:#ffffff;font-weight:700;-webkit-text-stroke:0.25px #ffffff;transform:scaleX(0.9710);transform-origin:0 0;">selezionato</span>
<span class="t g" style="left:1179.62px;top:183.50px;font-size:12px;line-height:16px;color:#ffffff;-webkit-text-stroke:0.35px #ffffff;transform:scaleX(1.0229);transform-origin:0 0;">OPERAZIONI</span>
<svg style="left:1159px;top:184px" width="16" height="16" viewBox="0 0 16 16"><path d="M14,1.6 L5.2,10.4" stroke="#5a6a80" stroke-width="2.6" stroke-linecap="round"/><path d="M14,1.6 L5.2,10.4" stroke="#f4f8fc" stroke-width="1.5" stroke-linecap="round"/><circle cx="14" cy="1.7" r="1.25" fill="#ffffff"/>
<path d="M6,9.6 L1.8,13.8" stroke="#e01414" stroke-width="3.6" stroke-linecap="round"/><path d="M5.4,9.4 L1.4,13.2" stroke="#f86060" stroke-width="0.9" stroke-linecap="round"/>
<path d="M1.9,4.2 A3.1,3.1 0 1 0 5.9,1.3" fill="none" stroke="#5070a0" stroke-width="2.7"/><path d="M1.9,4.2 A3.1,3.1 0 1 0 5.9,1.3" fill="none" stroke="#e4eefa" stroke-width="1.6"/><path d="M5.4,5.4 L10,10" stroke="#9fc0e8" stroke-width="2"/>
<path d="M10.2,10 L14,13.8" stroke="#ef9a14" stroke-width="3.6" stroke-linecap="round"/><path d="M10.8,9.6 L14.4,13.2" stroke="#ffd870" stroke-width="0.9" stroke-linecap="round"/></svg>
<svg style="left:1262px;top:191px" width="8" height="4" viewBox="0 0 8 4"><path d="M0,0 H7.6 L3.8,4 Z" fill="#000"/></svg>
<div class="a" style="left:239px;top:208px;width:137px;height:19px;background:#ffffe1;border:1px solid #9c9c9c;"></div>
<svg style="left:242px;top:211px" width="15" height="13" viewBox="0 0 15 13"><g shape-rendering="crispEdges"><rect x="0.5" y="0.5" width="10" height="12" fill="#ffffff" stroke="#5a4e4e"/><rect x="2" y="3" width="1" height="1" fill="#0000ff"/><rect x="4" y="3" width="1" height="1" fill="#0000ff"/><rect x="6" y="3" width="1" height="1" fill="#0000ff"/><rect x="8" y="3" width="1" height="1" fill="#0000ff"/><rect x="3" y="4" width="1" height="1" fill="#0000ff"/><rect x="5" y="4" width="1" height="1" fill="#0000ff"/><rect x="7" y="4" width="1" height="1" fill="#0000ff"/><rect x="2" y="6" width="1" height="1" fill="#f00000"/><rect x="4" y="6" width="1" height="1" fill="#f00000"/><rect x="6" y="6" width="1" height="1" fill="#f00000"/><rect x="8" y="6" width="1" height="1" fill="#f00000"/><rect x="3" y="7" width="1" height="1" fill="#f00000"/><rect x="5" y="7" width="1" height="1" fill="#f00000"/><rect x="7" y="7" width="1" height="1" fill="#f00000"/><rect x="2" y="9" width="1" height="1" fill="#0000ff"/><rect x="4" y="9" width="1" height="1" fill="#0000ff"/><rect x="6" y="9" width="1" height="1" fill="#0000ff"/><rect x="8" y="9" width="1" height="1" fill="#0000ff"/><rect x="3" y="10" width="1" height="1" fill="#0000ff"/><rect x="5" y="10" width="1" height="1" fill="#0000ff"/><rect x="7" y="10" width="1" height="1" fill="#0000ff"/></g><path d="M11,8.8 L14.4,9 L11.4,12.2 Z" fill="#555"/></svg>
<span class="t g" style="left:255.37px;top:209.50px;font-size:12px;line-height:16px;color:#000;transform:scaleX(0.8810);transform-origin:0 0;">Gruppo omogeneo:</span>
<div class="a" style="left:378px;top:208px;width:352px;height:19px;background:#ffffff;border:1px solid #9c9c9c;"></div>
<span class="t g" style="left:380.19px;top:209.50px;font-size:12px;line-height:16px;color:#000;transform:scaleX(0.8907);transform-origin:0 0;">Operatore escavatore</span>
<span class="t g" style="left:486.04px;top:209.50px;font-size:12px;line-height:16px;color:#000;transform:scaleX(0.8967);transform-origin:0 0;">con pinza e binda</span>
<div class="a" style="left:234px;top:231px;width:1041px;height:542px;background:#ffffff;border:1px solid #a0a0a0;"></div>
<div class="a" style="left:235px;top:232px;width:1039px;height:38px;background:#a0a0a0;border:1px solid #000;"></div>
<div class="a" style="left:235px;top:250px;width:1039px;height:1px;background:#000;"></div>
<div class="a" style="left:236px;top:233px;width:1037px;height:1px;background:#a9a9a9;"></div>
<div class="a" style="left:236px;top:251px;width:1037px;height:1px;background:#a9a9a9;"></div>
<div class="a" style="left:236px;top:249px;width:1037px;height:1px;background:#a9a9a9;"></div>
<div class="a" style="left:236px;top:268px;width:1037px;height:1px;background:#a9a9a9;"></div>
<div class="a" style="left:236px;top:233px;width:1px;height:17px;background:#a9a9a9;"></div>
<div class="a" style="left:236px;top:251px;width:1px;height:18px;background:#a9a9a9;"></div>
<div class="a" style="left:1272px;top:233px;width:1px;height:17px;background:#a9a9a9;"></div>
<div class="a" style="left:1272px;top:251px;width:1px;height:18px;background:#a9a9a9;"></div>
<div class="a" style="left:691px;top:251px;width:3px;height:18px;background:#a9a9a9;"></div>
<div class="a" style="left:692px;top:251px;width:1px;height:18px;background:#000;"></div>
<div class="a" style="left:805px;top:251px;width:3px;height:18px;background:#a9a9a9;"></div>
<div class="a" style="left:806px;top:251px;width:1px;height:18px;background:#000;"></div>
<div class="a" style="left:889px;top:251px;width:3px;height:18px;background:#a9a9a9;"></div>
<div class="a" style="left:890px;top:251px;width:1px;height:18px;background:#000;"></div>
<div class="a" style="left:974px;top:251px;width:3px;height:18px;background:#a9a9a9;"></div>
<div class="a" style="left:975px;top:251px;width:1px;height:18px;background:#000;"></div>
<div class="a" style="left:1058px;top:251px;width:3px;height:18px;background:#a9a9a9;"></div>
<div class="a" style="left:1059px;top:251px;width:1px;height:18px;background:#000;"></div>
<div class="a" style="left:1142px;top:251px;width:3px;height:18px;background:#a9a9a9;"></div>
<div class="a" style="left:1143px;top:251px;width:1px;height:18px;background:#000;"></div>
<span class="t g" style="left:408.22px;top:233.70px;font-size:12px;line-height:16px;color:#fff;font-weight:700;-webkit-text-stroke:0.25px #fff;transform:scaleX(0.9754);transform-origin:0 0;">Elenco utensili e mezzi utilizzati,</span>
<span class="t g" style="left:595.36px;top:233.70px;font-size:12px;line-height:16px;color:#fff;font-weight:700;-webkit-text-stroke:0.25px #fff;transform:scaleX(0.9460);transform-origin:0 0;">tempo di esposizione</span>
<span class="t g" style="left:717.61px;top:233.70px;font-size:12px;line-height:16px;color:#fff;font-weight:700;-webkit-text-stroke:0.25px #fff;transform:scaleX(0.9905);transform-origin:0 0;">(in % rispetto alle ore lavorative)</span>
<span class="t g" style="left:904.83px;top:233.70px;font-size:12px;line-height:16px;color:#fff;font-weight:700;-webkit-text-stroke:0.25px #fff;transform:scaleX(0.9942);transform-origin:0 0;">e valore delle vibrazioni</span>
<span class="t g" style="left:1044.00px;top:233.70px;font-size:12px;line-height:16px;color:#fff;font-weight:700;-webkit-text-stroke:0.25px #fff;transform:scaleX(1.0082);transform-origin:0 0;">(in m/sec²)</span>
<span class="t g" style="left:387.78px;top:252.70px;font-size:12px;line-height:16px;color:#fff;font-weight:700;-webkit-text-stroke:0.25px #fff;transform:scaleX(0.9945);transform-origin:0 0;">Utensile o mezzo utilizzato</span>
<span class="t g" style="left:723.37px;top:252.70px;font-size:12px;line-height:16px;color:#fff;font-weight:700;-webkit-text-stroke:0.25px #fff;transform:scaleX(0.9802);transform-origin:0 0;">Tipologia</span>
<span class="t g" style="left:830.86px;top:252.70px;font-size:12px;line-height:16px;color:#fff;font-weight:700;-webkit-text-stroke:0.25px #fff;transform:scaleX(1.0327);transform-origin:0 0;">Te (%)</span>
<span class="t g" style="left:919.70px;top:252.70px;font-size:12px;line-height:16px;color:#fff;font-weight:700;-webkit-text-stroke:0.25px #fff;transform:scaleX(1.0158);transform-origin:0 0;">A(w)</span>
<span class="t g" style="left:1009.25px;top:252.70px;font-size:12px;line-height:16px;color:#fff;font-weight:700;-webkit-text-stroke:0.25px #fff;transform:scaleX(1.2259);transform-origin:0 0;">f/c</span>
<span class="t g" style="left:1075.71px;top:252.70px;font-size:12px;line-height:16px;color:#fff;font-weight:700;-webkit-text-stroke:0.25px #fff;transform:scaleX(0.9725);transform-origin:0 0;">A(w) sum</span>
<span class="t g" style="left:1191.68px;top:252.70px;font-size:12px;line-height:16px;color:#fff;font-weight:700;-webkit-text-stroke:0.25px #fff;transform:scaleX(1.0172);transform-origin:0 0;">Fonte</span>
<div class="a" style="left:253px;top:287px;width:1021px;height:1px;background:#e3e3e3;"></div>
<div class="a" style="left:235px;top:305px;width:1039px;height:1px;background:#e3e3e3;"></div>
<div class="a" style="left:252px;top:270px;width:1px;height:36px;background:#e3e3e3;"></div>
<div class="a" style="left:692px;top:270px;width:1px;height:36px;background:#e3e3e3;"></div>
<div class="a" style="left:806px;top:270px;width:1px;height:36px;background:#e3e3e3;"></div>
<div class="a" style="left:890px;top:270px;width:1px;height:36px;background:#e3e3e3;"></div>
<div class="a" style="left:975px;top:270px;width:1px;height:36px;background:#e3e3e3;"></div>
<div class="a" style="left:1059px;top:270px;width:1px;height:36px;background:#e3e3e3;"></div>
<div class="a" style="left:1143px;top:270px;width:1px;height:36px;background:#e3e3e3;"></div>
<div class="a" style="left:1060px;top:270px;width:83px;height:17px;background:#ffffe1;"></div>
<div class="a" style="left:1060px;top:288px;width:83px;height:17px;background:#ffffe1;"></div>
<div class="a" style="left:253px;top:270px;width:439px;height:17px;background:#f0f0f0;border:1px dotted #000;"></div>
<span class="t g" style="left:255.10px;top:270.50px;font-size:12px;line-height:16px;color:#000;transform:scaleX(0.8605);transform-origin:0 0;">Utilizzo di</span>
<span class="t g" style="left:302.34px;top:270.50px;font-size:12px;line-height:16px;color:#000;transform:scaleX(0.8999);transform-origin:0 0;">escavatore con pinza</span>
<span class="t g" style="left:255.10px;top:288.50px;font-size:12px;line-height:16px;color:#000;transform:scaleX(0.8605);transform-origin:0 0;">Utilizzo di</span>
<span class="t g" style="left:302.12px;top:288.50px;font-size:12px;line-height:16px;color:#000;transform:scaleX(0.8837);transform-origin:0 0;">binda a motore</span>
<span class="t g" style="left:695.45px;top:270.50px;font-size:12px;line-height:16px;color:#000;transform:scaleX(0.8995);transform-origin:0 0;">WBV</span>
<span class="t g" style="left:695.45px;top:288.50px;font-size:12px;line-height:16px;color:#000;transform:scaleX(0.8995);transform-origin:0 0;">WBV</span>
<span class="t g" style="left:861.25px;top:270.50px;font-size:12px;line-height:16px;color:#000;transform:scaleX(0.9219);transform-origin:0 0;">40,00</span>
<span class="t g" style="left:861.25px;top:288.50px;font-size:12px;line-height:16px;color:#000;transform:scaleX(0.9219);transform-origin:0 0;">40,00</span>
<span class="t g" style="left:1035.63px;top:270.50px;font-size:12px;line-height:16px;color:#000;transform:scaleX(0.9556);transform-origin:0 0;">1,00</span>
<div class="a" style="left:243px;top:278px;width:9px;height:19px;border:1px dotted #909090;border-right:none;"></div>
<div class="a" style="left:996px;top:779px;width:34px;height:19px;background:#ffffe1;border:1px solid #a0a0a0;"></div>
<div class="a" style="left:1032px;top:779px;width:151px;height:19px;background:#ffffe1;border:1px solid #a0a0a0;"></div>
<div class="a" style="left:1185px;top:779px;width:46px;height:19px;background:#f0caa6;border:1px solid #a0a0a0;"></div>
<span class="t g" style="left:999.77px;top:780.90px;font-size:12px;line-height:16px;color:#000;transform:scaleX(0.9403);transform-origin:0 0;">HAV</span>
<span class="t g" style="left:1035.88px;top:780.90px;font-size:12px;line-height:16px;color:#000;transform:scaleX(0.8531);transform-origin:0 0;">A(8) - Sistema</span>
<span class="t g" style="left:1104.50px;top:780.90px;font-size:12px;line-height:16px;color:#000;transform:scaleX(0.8781);transform-origin:0 0;">mano-braccio:</span>
<span class="t g" style="left:1234.07px;top:781.80px;font-size:12px;line-height:16px;color:#000;transform:scaleX(0.9207);transform-origin:0 0;">m/sec²</span>
<div class="a" style="left:996px;top:800px;width:34px;height:19px;background:#ffffe1;border:1px solid #a0a0a0;"></div>
<div class="a" style="left:1032px;top:800px;width:151px;height:19px;background:#ffffe1;border:1px solid #a0a0a0;"></div>
<div class="a" style="left:1185px;top:800px;width:46px;height:19px;background:#f0caa6;border:1px solid #a0a0a0;"></div>
<span class="t g" style="left:1000.15px;top:801.90px;font-size:12px;line-height:16px;color:#000;transform:scaleX(0.8811);transform-origin:0 0;">WBV</span>
<span class="t g" style="left:1035.88px;top:801.90px;font-size:12px;line-height:16px;color:#000;transform:scaleX(0.8305);transform-origin:0 0;">A(8) - Corpo</span>
<span class="t g" style="left:1095.10px;top:801.90px;font-size:12px;line-height:16px;color:#000;transform:scaleX(0.8709);transform-origin:0 0;">intero:</span>
<span class="t g" style="left:1234.07px;top:800.80px;font-size:12px;line-height:16px;color:#000;transform:scaleX(0.9207);transform-origin:0 0;">m/sec²</span>
<div class="a" style="left:234px;top:825px;width:1041px;height:21px;background:#a0a0a0;"></div>
<span class="t g" style="left:238.00px;top:827.60px;font-size:12px;line-height:16px;color:#fff;font-weight:700;-webkit-text-stroke:0.25px #fff;transform:scaleX(0.9918);transform-origin:0 0;">Misure di prevenzione e protezione</span>
<div class="a" style="left:240px;top:853px;width:224px;height:19px;background:#ffffe1;border:1px solid #a0a0a0;"></div>
<span class="t g" style="left:243.81px;top:854.80px;font-size:12px;line-height:16px;color:#000;transform:scaleX(0.9002);transform-origin:0 0;">Misure tecniche,</span>
<span class="t g" style="left:325.75px;top:854.80px;font-size:12px;line-height:16px;color:#000;transform:scaleX(0.8848);transform-origin:0 0;">organizzative e</span>
<span class="t g" style="left:399.72px;top:854.80px;font-size:12px;line-height:16px;color:#000;transform:scaleX(0.8762);transform-origin:0 0;">procedurali:</span>
<div class="a" style="left:466px;top:853px;width:320px;height:19px;background:#ffffff;border:1px solid #a0a0a0;"></div>
<div class="a" style="left:769px;top:855px;width:15px;height:15px;background:#f0f0f0;"></div>
<div class="a" style="left:771px;top:861px;width:2px;height:2px;background:#000;"></div>
<div class="a" style="left:775px;top:861px;width:2px;height:2px;background:#000;"></div>
<div class="a" style="left:779px;top:861px;width:2px;height:2px;background:#000;"></div>
<div class="a" style="left:240px;top:874px;width:224px;height:19px;background:#ffffe1;border:1px solid #a0a0a0;"></div>
<span class="t g" style="left:243.82px;top:875.80px;font-size:12px;line-height:16px;color:#000;transform:scaleX(0.8976);transform-origin:0 0;">Lavoratori</span>
<span class="t g" style="left:294.45px;top:875.80px;font-size:12px;line-height:16px;color:#000;transform:scaleX(0.8694);transform-origin:0 0;">(nominativo):</span>
<div class="a" style="left:466px;top:874px;width:320px;height:19px;background:#ffffff;border:1px solid #a0a0a0;"></div>
<div class="a" style="left:769px;top:876px;width:15px;height:15px;background:#f0f0f0;"></div>
<div class="a" style="left:771px;top:882px;width:2px;height:2px;background:#000;"></div>
<div class="a" style="left:775px;top:882px;width:2px;height:2px;background:#000;"></div>
<div class="a" style="left:779px;top:882px;width:2px;height:2px;background:#000;"></div>
<div class="a" style="left:1px;top:903px;width:1274px;height:1px;background:#a0a0a0;"></div>
<div class="a" style="left:1px;top:904px;width:1px;height:16px;background:#a0a0a0;"></div>
<div class="a" style="left:2px;top:904px;width:957px;height:1px;background:#f8f8f8;"></div>
<div class="a" style="left:1px;top:920px;width:1274px;height:1px;background:#ffffff;"></div>
<span class="t" style="left:4.15px;top:904.00px;font-size:12px;line-height:16px;color:#1e1e1e;letter-spacing:-0.154px;">Verifica adempimenti</span>
<span class="t" style="left:973.96px;top:904.00px;font-size:12px;line-height:16px;color:#1e1e1e;letter-spacing:-0.359px;">v. 22.01g</span>
<span class="t" style="left:1194.02px;top:904.00px;font-size:12px;line-height:16px;color:#a9a9a9;letter-spacing:-0.597px;">MAIU</span>
<span class="t" style="left:1229.72px;top:904.00px;font-size:12px;line-height:16px;color:#000;letter-spacing:-0.230px;">NUM</span>
<div class="a" style="left:959px;top:904px;width:1px;height:16px;background:#ffffff;"></div>
<div class="a" style="left:963px;top:903px;width:67px;height:17px;border-left:1px solid #a0a0a0;border-top:1px solid #a0a0a0;border-right:1px solid #fff;"></div>
<div class="a" style="left:1032px;top:903px;width:157px;height:17px;border-left:1px solid #a0a0a0;border-top:1px solid #a0a0a0;border-right:1px solid #fff;"></div>
<div class="a" style="left:1191px;top:903px;width:34px;height:17px;border-left:1px solid #a0a0a0;border-top:1px solid #a0a0a0;border-right:1px solid #fff;"></div>
<div class="a" style="left:1227px;top:903px;width:32px;height:17px;border-left:1px solid #a0a0a0;border-top:1px solid #a0a0a0;border-right:1px solid #fff;"></div>
<svg style="left:1261px;top:907px" width="13" height="13" viewBox="0 0 13 13"><path d="M1,13 L13,1 M5,13 L13,5 M9,13 L13,9" stroke="#a6a6a6" stroke-width="1.3"/></svg>
</div>
</body></html>
